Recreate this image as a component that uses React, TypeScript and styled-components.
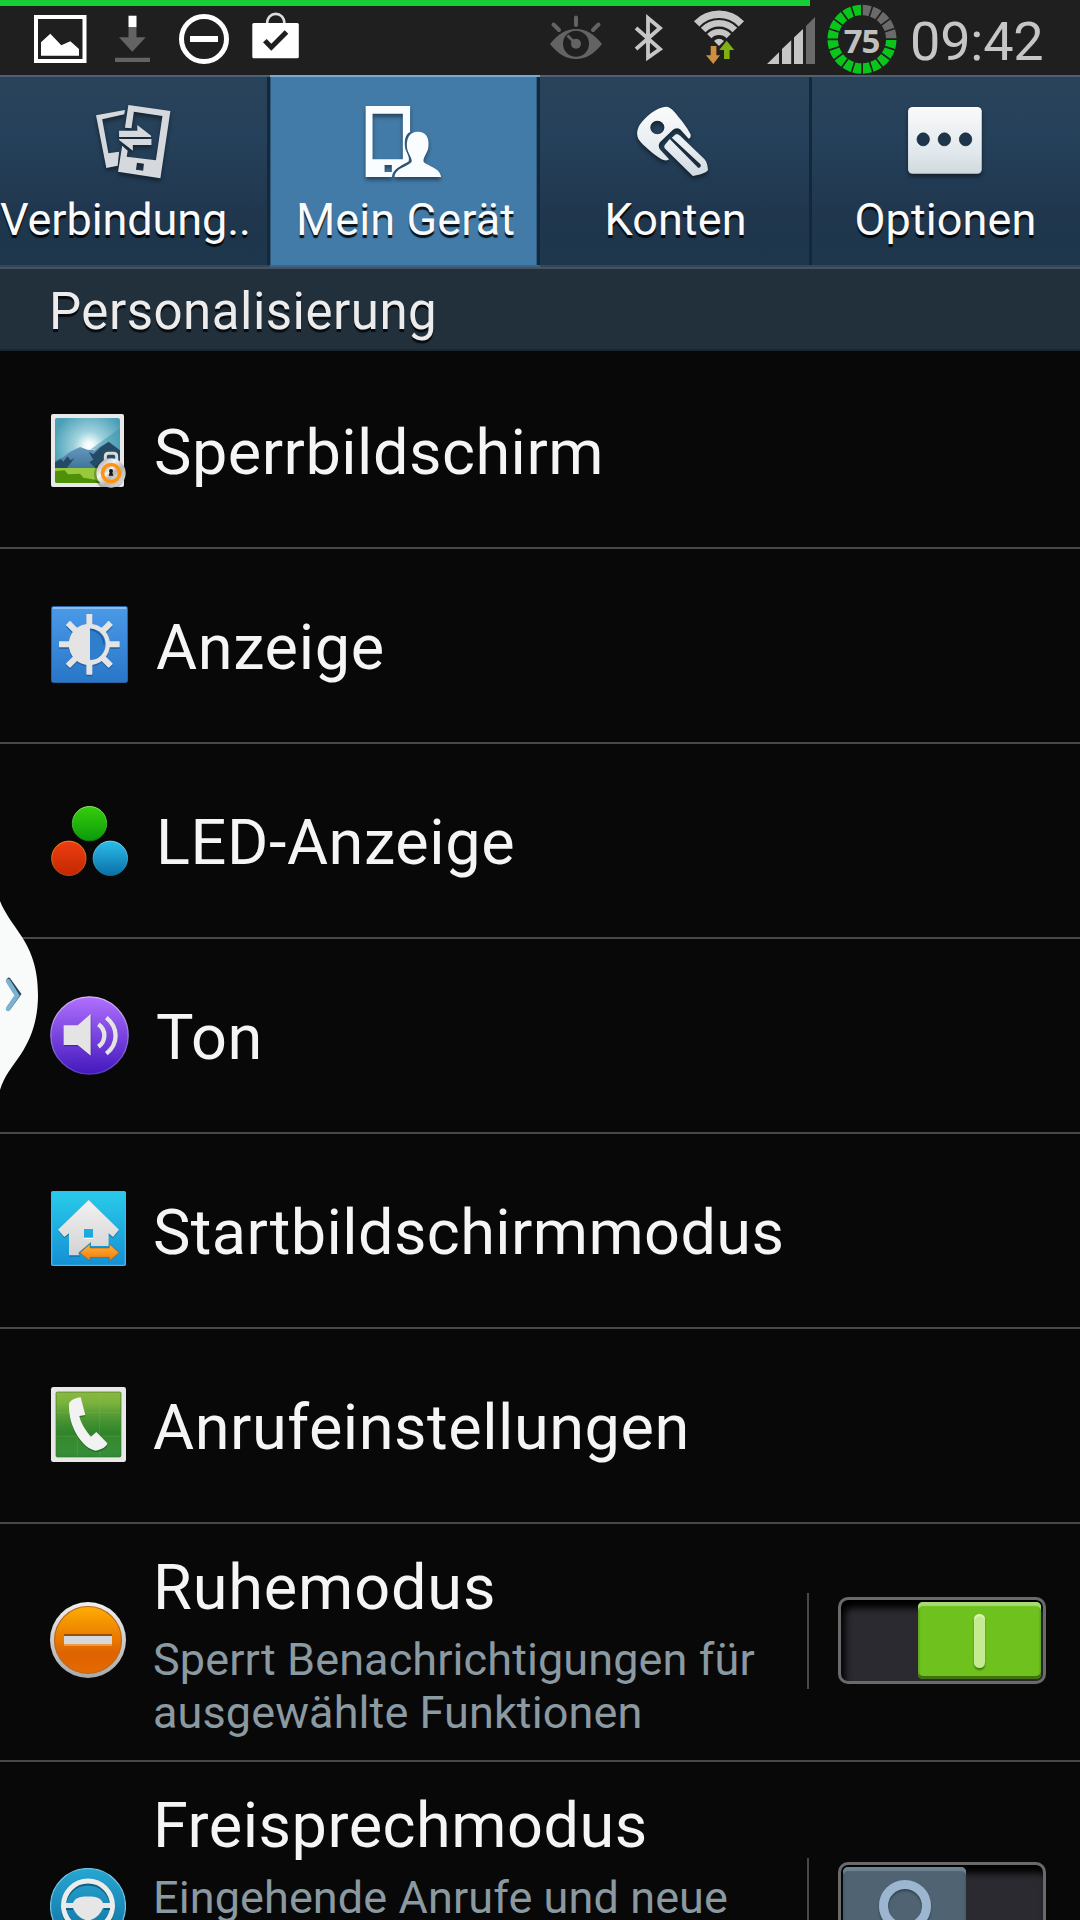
import React, { useState } from "react";
import styled, { createGlobalStyle, css } from "styled-components";

const color = {
  background: "#080808",
  statusBar: "#1f1f1f",
  progress: "#17cf34",
  statusIcon: "#c6c6c6",
  dim: "#636363",
  active: "#437ba8",
  section: "#22303c",
  line: "#484848",
  title: "#f5f5f5",
  summary: "#8b99a1",
};

const GlobalStyle = createGlobalStyle`
  * {
    box-sizing: border-box;
  }
  body {
    margin: 0;
    background: ${color.background};
    font-family: Roboto, "Noto Sans", sans-serif;
  }
`;

const Screen = styled.div`
  position: relative;
  width: 1080px;
  height: 1920px;
  overflow: hidden;
  background: ${color.background};
`;

const StatusBar = styled.header`
  position: relative;
  display: flex;
  justify-content: space-between;
  height: 75px;
  padding: 0 35px 0 30px;
  background: ${color.statusBar};
`;

const Progress = styled.div`
  position: absolute;
  top: 0;
  left: 0;
  width: 810px;
  height: 6px;
  background: ${color.progress};
`;

const StatusGroup = styled.div<{ $gap?: number }>`
  display: flex;
  gap: ${(p) => p.$gap || 0}px;
`;

const Clock = styled.span`
  width: 142px;
  padding-left: 7px;
  font-size: 54px;
  line-height: 83px;
  letter-spacing: -0.2px;
  color: ${color.statusIcon};
`;

const TabBar = styled.nav`
  display: grid;
  grid-template-columns: repeat(4, 270px);
  height: 192px;
`;

const Tab = styled.button<{ $active: boolean }>`
  display: flex;
  flex-direction: column;
  align-items: center;
  min-width: 0;
  padding: 0;
  border: none;
  font-family: inherit;
  cursor: pointer;
  background: linear-gradient(#284359, #25405a 35%, #1f364d 75%, #1e374c);
  box-shadow: inset 0 2px #4e6172, inset 0 -2px #32475a, inset -3px 0 #14283a;
  ${(p) =>
    p.$active &&
    css`
      background: ${color.active};
      box-shadow: inset 0 2px #7ba9d1, inset 0 -2px #3b6587, inset 1px 0 #2c587b,
        inset -3px 0 #14283a, inset -4px 0 #2f5f85;
    `}
  &:nth-child(3) {
    box-shadow: inset 0 2px #4e6172, inset 0 -2px #32475a, inset -1px 0 #14283a;
  }
  &:last-child {
    box-shadow: inset 0 2px #4e6172, inset 0 -2px #32475a, inset 2px 0 #14283a;
  }
`;

const TabLabel = styled.span<{ $start?: boolean }>`
  align-self: ${(p) => (p.$start ? "flex-start" : "center")};
  padding-left: ${(p) => (p.$start ? 0 : 1)}px;
  font-size: 45px;
  line-height: 53px;
  letter-spacing: ${(p) => (p.$start ? -0.1 : 0.1)}px;
  white-space: nowrap;
  color: #fafafa;
  text-shadow: 0 3px 1px rgba(0, 0, 0, 0.85);
`;

const SectionHeader = styled.h2`
  height: 84px;
  margin: 0;
  padding: 5px 0 0 49px;
  background: ${color.section};
  box-shadow: inset 0 2px #46525f, inset 0 -2px #1b2630;
  font-size: 51px;
  font-weight: 400;
  line-height: 79px;
  letter-spacing: 0.5px;
  color: #ececec;
  text-shadow: 0 3px 1px rgba(0, 0, 0, 0.75);
`;

const List = styled.ul`
  margin: 0;
  padding: 0;
  list-style: none;
`;

const Row = styled.li<{ $height: number }>`
  display: flex;
  align-items: center;
  height: ${(p) => p.$height}px;
  padding: 0 34px 0 50px;
  border-bottom: 2px solid ${color.line};
  &:first-child {
    height: 198px;
    padding-top: 3px;
  }
`;

const RowText = styled.div`
  flex: 1;
  align-self: flex-start;
  padding: 23px 0 0 27px;
`;

const Title = styled.div<{ $tracking?: number }>`
  padding-top: 4px;
  font-size: 63px;
  line-height: 74px;
  letter-spacing: ${(p) => p.$tracking ?? 0.5}px;
  white-space: nowrap;
  color: ${color.title};
`;

const PlainTitle = styled(Title)`
  padding-left: 27px;
`;

const Summary = styled.div`
  width: 640px;
  margin-top: 8px;
  font-size: 45px;
  line-height: 53px;
  letter-spacing: 0.1px;
  color: ${color.summary};
`;

const Divider = styled.div`
  width: 2px;
  height: 96px;
  margin: 0 29px 2px 0;
  background: ${color.line};
`;

const Track = styled.button<{ $on: boolean }>`
  display: flex;
  justify-content: ${(p) => (p.$on ? "flex-end" : "flex-start")};
  width: 208px;
  height: 87px;
  margin: 0 0 3px;
  padding: 2px;
  border: 3px solid #6a6a6a;
  border-radius: 10px;
  background: #2a2a30;
  box-shadow: inset 4px 8px 7px #000;
  cursor: pointer;
`;

const Knob = styled.span<{ $on: boolean }>`
  display: flex;
  align-items: center;
  justify-content: center;
  width: 123px;
  height: 77px;
  border-radius: 5px;
  background: ${(p) => (p.$on ? "#6fc11d" : "#4f6373")};
  box-shadow: ${(p) =>
    p.$on
      ? "inset 0 4px 1px #a8da76, inset 0 -3px #41700f, inset 0 0 2px 1px #56951a"
      : "inset 0 4px 1px #6f8290, inset 0 -3px #2f3e4a, inset 0 0 2px 1px #40525f"};
`;

const OnMark = styled.span`
  width: 11px;
  height: 54px;
  border-radius: 6px;
  background: #c5eb92;
  box-shadow: 0 2px 2px #3f7a0c, inset 0 2px 1px #ddf6bd;
`;

const OffMark = styled.span`
  width: 52px;
  height: 52px;
  border: 9px solid #9db6cf;
  border-radius: 50%;
  box-shadow: 0 2px 2px #2f3e4a, inset 0 2px 2px #33434f;
`;

const SideHandle = styled.svg`
  position: absolute;
  left: 0;
  top: 890px;
`;

const TabIcon = styled.svg`
  flex: none;
  width: 120px;
  height: 118px;
  filter: drop-shadow(0 3px 2px rgba(0, 0, 0, 0.45));
`;

const GalleryIcon = () => (
  <svg width="60" height="75" viewBox="30 0 60 75">
    <rect x="36" y="17" width="48.5" height="44" fill="none" stroke="#fff" strokeWidth="4" />
    <path d="M41 55.7V42.3L50.3 33.7L61.3 45.3L70.3 41.3L79 49V55.7Z" fill="#fff" />
  </svg>
);

const DownloadIcon = () => (
  <svg width="55" height="75" viewBox="105 0 55 75">
    <path d="M128.5 27h8v10.3h9.2L132.3 51.7L119 37.3h9.5ZM115 57.7h35v4.3h-35Z" fill={color.dim} />
    <path d="M128.5 15.7h8V27h-8Z" fill="#fff" />
  </svg>
);

const BlockIcon = () => (
  <svg width="58" height="75" viewBox="175 0 58 75">
    <circle cx="204" cy="39" r="22.5" fill="none" stroke="#fff" strokeWidth="5" />
    <path d="M190 36h28v6h-28Z" fill="#fff" />
  </svg>
);

const BagIcon = () => (
  <svg width="55" height="75" viewBox="248 0 55 75">
    <path d="M267 24c0-13.5 17.5-13.5 17.5 0" fill="none" stroke="#ddd" strokeWidth="2.6" />
    <rect x="252.3" y="23" width="46.5" height="35.3" rx="1.5" fill="#fff" />
    <path d="M263 42.3L266.7 39L271.3 43.7L284.7 30.3L288.3 33.7L271.3 50.7Z" fill={color.statusBar} />
  </svg>
);

const EyeIcon = () => (
  <svg width="71" height="75" viewBox="548 0 71 75">
    <path d="M550 44C558 34 566 29 576 29S594 34 602 44C594 54 586 59 576 59S558 54 550 44Z" fill={color.dim} />
    <circle cx="576" cy="43.7" r="13" fill={color.statusBar} />
    <circle cx="576" cy="43.7" r="5" fill={color.dim} />
    <path d="M567.5 35.5L573 41" stroke={color.dim} strokeWidth="2.6" />
    <path d="M576 17.5V25M553.5 24.5L559 30M598.5 24.5L593 30" stroke={color.dim} strokeWidth="4" strokeLinecap="round" />
  </svg>
);

const BluetoothIcon = () => (
  <svg width="59" height="75" viewBox="619 0 59 75">
    <path d="M636 28L660 49L648 57.5V18L660 28L636 49" fill="none" stroke={color.statusIcon} strokeWidth="3.8" />
  </svg>
);

// arc around the foot of the wifi fan, 45 degrees to both sides
const fan = (r: number) => {
  const d = r * 0.72;
  return `M${719 - d} ${45.5 - r * 0.7}A${r} ${r} 0 0 1 ${719 + d} ${45.5 - r * 0.7}`;
};

const WifiIcon = () => (
  <svg width="78" height="75" viewBox="678 0 78 75">
    <g fill="none" stroke={color.statusIcon}>
      <path d={fan(31)} strokeWidth="7.5" />
      <path d={fan(22)} strokeWidth="6.5" />
      <path d={fan(13.5)} strokeWidth="6" />
    </g>
    <path d="M714 41Q719 36.5 724 41L719 46Z" fill={color.statusIcon} />
    <path d="M710.7 46h5.7v9.3h3.6L713.3 64L706 55.3h4.7Z" fill="#cf8f3c" />
    <path d="M724 59v-9h-4.8L726.7 40.7L734.2 50h-4.6v9Z" fill="#7fb013" />
  </svg>
);

const SignalIcon = () => (
  <svg width="65" height="75" viewBox="756 0 65 75">
    <path
      d="M767 64L779 52.3V64ZM782 64V49L791.2 40.3V64ZM794 64V37.5L803 29V64Z"
      fill={color.statusIcon}
    />
    <path d="M806 64V26L815 17V64Z" fill="#6a6a6a" />
  </svg>
);

const BatteryText = styled.text`
  font-family: "Open Sans", sans-serif;
  font-size: 33px;
  font-weight: 700;
  letter-spacing: -1.2px;
  fill: #c0c0c0;
`;

const segments = Array.from({ length: 20 }, (_, i) => i);

const BatteryIcon = () => (
  <svg width="82" height="75" viewBox="821 0 82 75">
    {segments.map((i) => (
      <path
        key={i}
        d="M862.7 4.8Q867.5 4.9 871.7 6.2L868.5 16.2Q865.5 15.3 862.7 15.3Z"
        fill={i < 5 ? "#6a6a6a" : "#0ac61c"}
        transform={`rotate(${i * 18} 862 39.3)`}
      />
    ))}
    <BatteryText x="861.5" y="52.7" textAnchor="middle">75</BatteryText>
  </svg>
);

const ConnectionsIcon = () => (
  <TabIcon viewBox="218 15 348.5 354" preserveAspectRatio="none">
    <g fill="#d5d9dd" fillRule="evenodd">
      <path d="M279 136L363 120L361 133L297 148L315 250L346 245L342 287L309 294Z" />
      <path d="M373 105L495 123L466 325L343 305L355 227L371 242L368 260L453 271L472 138L389 125L382 175L363 173ZM398 278L395 299L416 302L418 281Z" />
      <path d="M346 182H399V165L439 197V201H346ZM346 207H440V225H386V242L346 210Z" />
    </g>
  </TabIcon>
);

const DeviceIcon = () => (
  <TabIcon viewBox="1002 15 348.5 354" preserveAspectRatio="none">
    <path
      d="M1062 108H1191V186C1177 193 1173 212 1177 236C1184 254 1190 262 1187 274C1172 286 1141 294 1138 321H1062ZM1082 131V268H1170V131ZM1117 285V306H1138V285Z"
      fill="#fafdff"
      fillRule="evenodd"
    />
    <path
      d="M1213 185C1236 185 1248 202 1244 232C1242 250 1229 260 1230 275C1240 288 1278 292 1281 321H1146C1148 292 1190 290 1196 274C1196 262 1184 250 1182 232C1180 204 1190 185 1213 185Z"
      fill="#fafdff"
    />
  </TabIcon>
);

const KeyIcon = () => (
  <TabIcon viewBox="218 15 348.5 354" preserveAspectRatio="none">
    <defs>
      <linearGradient id="key" x1="0" y1="110" x2="0" y2="318" gradientUnits="userSpaceOnUse">
        <stop offset="0" stopColor="#fbfbfb" />
        <stop offset="0.6" stopColor="#e6ecf0" />
        <stop offset="1" stopColor="#cfdade" />
      </linearGradient>
    </defs>
    <g fill="url(#key)" fillRule="evenodd">
      <path d="M365 110C375 110 383 116 390 125C408 147 428 172 438 194C438 204 434 208 430 204L407 178C399 172 391 175 385 181L350 215C343 223 344 232 350 240L375 268C370 273 360 272 353 268C330 252 300 228 286 207C280 195 281 180 290 164C306 140 338 112 365 110ZM341 152A20 20 0 1 0 341 193A20 20 0 1 0 341 152Z" />
      <path d="M362 226L377 207L460 294C466 294 469 288 466 283L383 203L393 194C398 191 402 193 407 197L478 268C486 277 487 290 488 300C481 310 463 314 444 318L365 238C361 234 360 231 362 226Z" />
    </g>
  </TabIcon>
);

const MoreIcon = () => (
  <TabIcon viewBox="1002 15 348.5 354" preserveAspectRatio="none">
    <defs>
      <linearGradient id="more" x1="0" y1="0" x2="0" y2="1">
        <stop offset="0" stopColor="#fafafa" />
        <stop offset="0.7" stopColor="#e0e8ed" />
        <stop offset="1" stopColor="#cfd8da" />
      </linearGradient>
    </defs>
    <rect x="1069" y="111" width="214" height="200" rx="13" fill="url(#more)" />
    <g fill="#1e364c" stroke="#13202c" strokeWidth="2">
      <ellipse cx="1113" cy="208" rx="18" ry="19.5" />
      <ellipse cx="1174.5" cy="208" rx="18" ry="19.5" />
      <ellipse cx="1236" cy="208" rx="18" ry="19.5" />
    </g>
  </TabIcon>
);

type GradientProps = { id: string; from: string; to: string };

const Gradient = ({ id, from, to }: GradientProps) => (
  <linearGradient id={id} x1="0" y1="0" x2="0" y2="1">
    <stop offset="0" stopColor={from} />
    <stop offset="1" stopColor={to} />
  </linearGradient>
);

const LockScreenIcon = () => (
  <svg width="77" height="76" viewBox="60 66 231 228">
    <defs>
      <radialGradient id="sky" cx="178" cy="165" r="110" gradientUnits="userSpaceOnUse">
        <stop offset="0" stopColor="#fff" />
        <stop offset="0.12" stopColor="#f1fafb" />
        <stop offset="0.4" stopColor="#9fd2dd" />
        <stop offset="1" stopColor="#4a9fb6" />
      </radialGradient>
      <Gradient id="hill" from="#6fa0c4" to="#3f7399" />
      <linearGradient id="steel" x1="0" y1="0" x2="1" y2="1">
        <stop offset="0" stopColor="#8f8f8f" />
        <stop offset="0.35" stopColor="#f4f4f4" />
        <stop offset="0.6" stopColor="#b5b5b5" />
        <stop offset="1" stopColor="#e8e8e8" />
      </linearGradient>
      <clipPath id="photo">
        <rect x="75" y="81" width="195" height="195" rx="6" />
      </clipPath>
    </defs>
    <rect x="63" y="69" width="219" height="219" rx="6" fill="#e9e9e9" />
    <g clipPath="url(#photo)">
      <rect x="75" y="81" width="195" height="195" fill="url(#sky)" />
      <path d="M270 112L180 176H270Z" fill="#3592ac" opacity="0.5" />
      <path d="M75 210L100 198L120 182L150 168L172 176L195 178L212 165L236 152L270 178V235H75Z" fill="url(#hill)" />
      <path d="M75 214L92 204L100 212L112 196L122 208L134 200L110 232H75ZM176 182L190 190L212 168L236 152L252 164L270 178V235H200L178 214L190 206Z" fill="#234b66" />
      <path d="M75 231H270V276H75Z" fill="#97c93c" />
      <path d="M75 241L104 238L114 250L150 248L160 260L196 266L215 276H75Z" fill="#4e9008" />
    </g>
    <path d="M226 212V196Q226 187 235 187H251Q260 187 260 196V212" fill="none" stroke="#dadada" strokeWidth="9" />
    <circle cx="238" cy="250" r="46" fill="#000" opacity="0.25" />
    <circle cx="243" cy="246" r="44" fill="url(#steel)" />
    <circle cx="243" cy="246" r="31" fill="#ff9310" />
    <circle cx="243" cy="246" r="20" fill="url(#steel)" />
    <circle cx="243" cy="240" r="6" fill="#151515" />
    <path d="M240 242h6l4 12h-14Z" fill="#151515" />
  </svg>
);

const DisplayIcon = () => (
  <svg width="79" height="79" viewBox="60 48 237 237">
    <defs>
      <Gradient id="display" from="#4b9ae8" to="#2976c8" />
    </defs>
    <rect x="64.5" y="49.5" width="228" height="228" rx="6" fill="url(#display)" stroke="#2a63a3" strokeWidth="3" />
    <path d="M68 54H289" stroke="#9fc8f2" strokeWidth="5" />
    <g transform="translate(178 163)">
      <g fill="#1c4f8a" opacity="0.6" transform="translate(0 5)">
        {[0, 45, 90, 135, 180, 225, 270, 315].map((a) => (
          <rect key={a} x="-9" y="-91" width="18" height="36" rx="2" transform={`rotate(${a})`} />
        ))}
        <circle r="62" />
      </g>
      <g fill="#e4e4e4">
        {[0, 45, 90, 135, 180, 225, 270, 315].map((a) => (
          <rect key={a} x="-9" y="-91" width="18" height="36" rx="2" transform={`rotate(${a})`} />
        ))}
        <circle r="62" />
      </g>
      <path d="M2 -47A47 47 0 0 1 2 47Z" fill="#2f7dcd" />
      <path d="M2 -45A47 47 0 0 1 44 0" fill="none" stroke="#1d5ea3" strokeWidth="5" />
    </g>
  </svg>
);

const LedIcon = () => (
  <svg width="79" height="79" viewBox="150 33 237 237">
    <defs>
      <Gradient id="green" from="#37cd0c" to="#0b9a0b" />
      <Gradient id="red" from="#ee3d13" to="#c42800" />
      <Gradient id="blue" from="#2bbdea" to="#0a6fa8" />
      <Gradient id="greenEdge" from="#8fe36c" to="#0a7f0a" />
      <Gradient id="redEdge" from="#ff9010" to="#a84a2a" />
      <Gradient id="blueEdge" from="#85d9f5" to="#0c7088" />
    </defs>
    <circle cx="268.5" cy="101" r="51.5" fill="url(#green)" stroke="url(#greenEdge)" strokeWidth="3" />
    <circle cx="206.5" cy="205" r="51.5" fill="url(#red)" stroke="url(#redEdge)" strokeWidth="3" />
    <circle cx="331" cy="205" r="51.5" fill="url(#blue)" stroke="url(#blueEdge)" strokeWidth="3" />
  </svg>
);

const SoundIcon = () => (
  <svg width="79" height="79" viewBox="150 618 237 237">
    <defs>
      <Gradient id="sound" from="#b070ff" to="#4318bd" />
      <Gradient id="soundEdge" from="#d5b5f5" to="#5a3cc4" />
    </defs>
    <circle cx="268.5" cy="736.5" r="116" fill="url(#sound)" stroke="url(#soundEdge)" strokeWidth="4" />
    <g fill="#2c0f85" opacity="0.5" transform="translate(2 4)">
      <path d="M191 706H233L272 672V797L233 765H191Z" />
    </g>
    <path d="M191 706H233L272 672V797L233 765H191Z" fill="#e4e4e4" />
    <g fill="none" stroke="#e4e4e4" strokeWidth="13">
      <path d="M295 703C319 719 319 754 295 770" />
      <path d="M319 683C356 713 356 762 319 791" />
    </g>
  </svg>
);

const HomeIcon = () => (
  <svg width="76" height="79" viewBox="60 63 228 237">
    <defs>
      <Gradient id="home" from="#29cbea" to="#1590d3" />
      <Gradient id="house" from="#f2f2f2" to="#d3d3d5" />
      <Gradient id="arrow" from="#ffb338" to="#f27a0c" />
    </defs>
    <rect x="65" y="65" width="221" height="221" rx="3" fill="url(#home)" stroke="#3ab9f5" strokeWidth="4" />
    <path
      d="M117 260V194L103 205L84 182L176 93L267 182L249 205L236 194V260ZM162 177V203H189V177Z"
      fill="#0c5c8f"
      fillRule="evenodd"
      opacity="0.6"
    />
    <path d="M117 256V190L103 201L84 179L176 90L267 179L249 201L236 190V256ZM162 177V203H189V177Z" fill="url(#house)" fillRule="evenodd" />
    <path d="M145 248L183 216V228H236L267 248V262H150Z" fill="#1796d6" />
    <path d="M150 248L180 222V234H238V222L267 248L238 273V262H180V273Z" fill="url(#arrow)" stroke="#9a4d10" strokeWidth="1.5" />
    <path d="M162 205H189" stroke="#fff" strokeWidth="3" />
  </svg>
);

const CallIcon = () => (
  <svg width="76" height="79" viewBox="60 648 228 237">
    <defs>
      <Gradient id="call" from="#8aba3e" to="#2f8a37" />
      <linearGradient id="callMid" x1="0" y1="0" x2="0" y2="1">
        <stop offset="0" stopColor="#217a24" stopOpacity="0" />
        <stop offset="0.6" stopColor="#217a24" stopOpacity="0.7" />
        <stop offset="1" stopColor="#217a24" stopOpacity="0" />
      </linearGradient>
    </defs>
    <rect x="63" y="651" width="225" height="225" rx="7" fill="#e8e8e8" />
    <rect x="78" y="666" width="195" height="195" rx="4" fill="url(#call)" stroke="#3f6f2a" strokeWidth="2" />
    <rect x="79" y="700" width="193" height="150" fill="url(#callMid)" />
    <path d="M142 667V860M209 667V860M79 728H272M79 799H272" stroke="#8fc060" strokeWidth="2" opacity="0.3" />
    <path
      d="M152 686L166 739L148 742C152 762 166 785 185 802L199 790L232 824C230 834 215 844 197 846C160 840 114 778 117 706C118 697 136 687 152 686Z"
      fill="#123f12"
      opacity="0.5"
    />
    <path
      d="M152 682L166 735L148 738C152 758 166 781 183 800L199 786L232 820C230 830 215 840 197 842C160 836 114 774 117 702C118 693 136 683 152 682Z"
      fill="#f2f2f2"
    />
  </svg>
);

const QuietIcon = () => (
  <svg width="76" height="84" viewBox="50 1600 76 84">
    <defs>
      <Gradient id="rim" from="#f0f0f0" to="#a9a9ad" />
      <linearGradient id="quiet" x1="0" y1="0" x2="0" y2="1">
        <stop offset="0" stopColor="#ffad00" />
        <stop offset="0.7" stopColor="#de6300" />
        <stop offset="1" stopColor="#e66a00" />
      </linearGradient>
    </defs>
    <circle cx="88" cy="1640" r="38" fill="url(#rim)" />
    <circle cx="88" cy="1640" r="33.5" fill="url(#quiet)" stroke="#b96a1c" strokeWidth="1.2" />
    <path d="M64 1634H112V1636H64Z" fill="#965000" />
    <path d="M64 1636H112V1644H64Z" fill="#d5d8da" />
    <path d="M64 1644H112V1646H64Z" fill="#f09a48" />
  </svg>
);

const DriveIcon = () => (
  <svg width="76" height="78" viewBox="50 1868 76 78">
    <defs>
      <Gradient id="drive" from="#27a6d2" to="#0f6f9f" />
    </defs>
    <circle cx="88" cy="1906" r="37.5" fill="url(#drive)" stroke="#6fc3e0" strokeWidth="1.2" />
    <circle cx="88" cy="1907.5" r="24.5" fill="none" stroke="#125f80" strokeWidth="5" />
    <circle cx="88" cy="1905.5" r="24.5" fill="none" stroke="#ececec" strokeWidth="5" />
    <path d="M66 1907.5H73V1910H66ZM104 1907.5H110V1910H104Z" fill="#125f80" />
    <path
      d="M66 1903H73C75 1898 79 1896.5 88 1896.5S101 1898 103 1903H110V1908H103C101 1913 97 1917 93 1919L88 1921L83 1919C79 1917 75 1913 73 1908H66Z"
      fill="#e6e6e6"
    />
  </svg>
);

const tabs = [
  { label: "Verbindung..", Icon: ConnectionsIcon },
  { label: "Mein Gerät", Icon: DeviceIcon },
  { label: "Konten", Icon: KeyIcon },
  { label: "Optionen", Icon: MoreIcon },
];

const items = [
  { title: "Sperrbildschirm", Icon: LockScreenIcon },
  { title: "Anzeige", Icon: DisplayIcon, tracking: 0.65 },
  { title: "LED-Anzeige", Icon: LedIcon, tracking: 0.6 },
  { title: "Ton", Icon: SoundIcon },
  { title: "Startbildschirmmodus", Icon: HomeIcon, tracking: 0.4 },
  { title: "Anrufeinstellungen", Icon: CallIcon, tracking: 0.55 },
];

type SwitchRowProps = {
  title: string;
  summary: string;
  height: number;
  Icon: React.FC;
  tracking?: number;
  defaultOn?: boolean;
};

function SwitchRow({ title, summary, height, Icon, tracking, defaultOn = false }: SwitchRowProps) {
  const [on, setOn] = useState(defaultOn);

  return (
    <Row $height={height}>
      <Icon />
      <RowText>
        <Title $tracking={tracking}>{title}</Title>
        <Summary>{summary}</Summary>
      </RowText>
      <Divider />
      <Track $on={on} onClick={() => setOn(!on)}>
        <Knob $on={on}>{on ? <OnMark /> : <OffMark />}</Knob>
      </Track>
    </Row>
  );
}

function App() {
  const [active, setActive] = useState(1);

  return (
    <Screen>
      <GlobalStyle />
      <StatusBar>
        <Progress />
        <StatusGroup $gap={15}>
          <GalleryIcon />
          <DownloadIcon />
          <BlockIcon />
          <BagIcon />
        </StatusGroup>
        <StatusGroup>
          <EyeIcon />
          <BluetoothIcon />
          <WifiIcon />
          <SignalIcon />
          <BatteryIcon />
          <Clock>09:42</Clock>
        </StatusGroup>
      </StatusBar>
      <TabBar>
        {tabs.map(({ label, Icon }, i) => (
          <Tab key={label} $active={i === active} onClick={() => setActive(i)}>
            <Icon />
            <TabLabel $start={i === 0}>{label}</TabLabel>
          </Tab>
        ))}
      </TabBar>
      <SectionHeader>Personalisierung</SectionHeader>
      <List>
        {items.map(({ title, Icon, tracking }) => (
          <Row key={title} $height={195}>
            <Icon />
            <PlainTitle $tracking={tracking}>{title}</PlainTitle>
          </Row>
        ))}
        <SwitchRow
          title="Ruhemodus"
          summary="Sperrt Benachrichtigungen für ausgewählte Funktionen"
          height={238}
          Icon={QuietIcon}
          tracking={0.85}
          defaultOn
        />
        <SwitchRow
          title="Freisprechmodus"
          summary="Eingehende Anrufe und neue"
          height={292}
          Icon={DriveIcon}
        />
      </List>
      <SideHandle width="50" height="210" viewBox="0 890 50 210">
        <path d="M0 901C4 912 14 925 22 937C31 951 38 968 38 995C38 1022 30 1040 21 1054C13 1066 4 1076 0 1090Z" fill="#f9fbfa" />
        <path d="M8 981L18 995L8 1009" fill="none" stroke="#2d4656" strokeWidth="4.5" transform="translate(0.7 -1)" strokeLinecap="round" />
        <path d="M8 981L17 995.5L8 1009" fill="none" stroke="#7ab2d1" strokeWidth="4.5" strokeLinecap="round" />
      </SideHandle>
    </Screen>
  );
}

export default App;
